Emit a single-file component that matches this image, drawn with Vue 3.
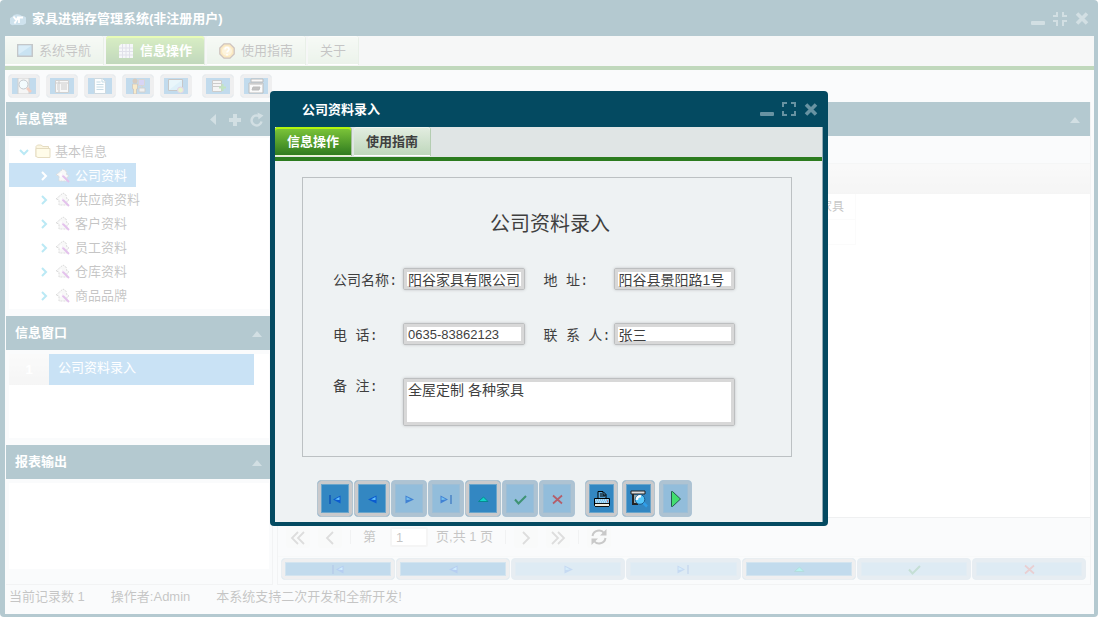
<template>
  <div class="app">
    <svg class="sprite" aria-hidden="true">
      <symbol id="i-minimize" viewBox="0 0 16 16"><rect x="1" y="10" width="14" height="4" rx="1" fill="currentColor"/></symbol>
      <symbol id="i-maximize" viewBox="0 0 16 16"><path d="M2 5V1h4M10 1h4v4M14 9v4h-4M6 13H2V9" fill="none" stroke="currentColor" stroke-width="2"/></symbol>
      <symbol id="i-restore" viewBox="0 0 16 16"><path d="M5 1v4H1M11 1v4h4M15 10h-4v5M1 10h4v5" fill="none" stroke="currentColor" stroke-width="2"/></symbol>
      <symbol id="i-close" viewBox="0 0 16 16"><path d="M3 2.500l10 10M13 2.500l-10 10" stroke="currentColor" stroke-width="3.600"/></symbol>
      <symbol id="i-logo" viewBox="0 0 16 16"><path d="M4 14a4 4 0 0 1-2-8 6 5 0 0 1 10-1 4.500 4.500 0 0 1 1 9z" fill="#5d9dc4"/><path d="M3.500 5.500l3 4M8.500 5.500l-4 7M9 12V6.500h4" fill="none" stroke="#fff" stroke-width="1.800"/></symbol>
      <symbol id="i-screen" viewBox="0 0 16 16"><path d="M0 1h16v13H0z" fill="#3b444a"/><path d="M1.500 2.500h13v10h-13z" fill="#4aa0d4"/><path d="M1.500 2.500h13l-13 9z" fill="#82c4e8"/></symbol>
      <symbol id="i-grid" viewBox="0 0 16 16"><path d="M3 1h12v14H1V3z" fill="#dfe3ea"/><path d="M1 5h14M1 8.500h14M1 12h14M4.500 1v14M8 1v14M11.500 1v14" stroke="#9a9ab8"/></symbol>
      <symbol id="i-help" viewBox="0 0 16 16"><path d="M5 .8h6L15.200 5v6L11 15.200H5L.8 11V5z" fill="#f2b632" stroke="#5d3a2c" stroke-width="1.300"/><circle cx="8" cy="8" r="5" fill="#f9d98c"/><path d="M6 6.500c0-3 4-2.500 4 0 0 1.500-2 1.500-2 3M8 11v1.500" fill="none" stroke="#fff" stroke-width="1.600"/></symbol>
      <symbol id="i-search" viewBox="0 0 16 16"><path d="M2 0h11v16H2z" fill="#ddd" stroke="#666"/><circle cx="7.500" cy="6.500" r="4.500" fill="#d7f0fa" stroke="#345"/><path d="M11 10l4 4" stroke="#d4572e" stroke-width="2.500"/></symbol>
      <symbol id="i-list" viewBox="0 0 16 16"><path d="M1.500 2.500h13v12h-13z" fill="#e8e8e8" stroke="#666"/><path d="M5 3v11M2 5h12M7 7h6M7 9h6M7 11h6M3 7h1M3 9h1M3 11h1" stroke="#555"/></symbol>
      <symbol id="i-page" viewBox="0 0 16 16"><path d="M2.500.5h8l3 3v12h-11z" fill="#f4fafd" stroke="#5d8196"/><path d="M10 1v3h3M4.500 4h4M4.500 6.500h7M4.500 9h7M4.500 11.500h7" fill="none" stroke="#48a"/></symbol>
      <symbol id="i-user" viewBox="0 0 16 16"><circle cx="5" cy="3" r="2.500" fill="#7b532b"/><path d="M2.500 6h5v5h-1v5h-3v-5h-1z" fill="#e6b94c" stroke="#543" stroke-width=".8"/><path d="M8.500 1.500h6v6h-6z" fill="#7b70dd" stroke="#777"/><path d="M9 10h6v4H9zM11 8h1v2" fill="#ccc" stroke="#666"/></symbol>
      <symbol id="i-window" viewBox="0 0 16 16"><path d="M.5 1.500h14v11H.5z" fill="#8fcbea" stroke="#444"/><path d="M1 12L14 2H1z" fill="#b4dff2"/><circle cx="12.500" cy="12" r="3" fill="#b4d86a" stroke="#a06ab5"/></symbol>
      <symbol id="i-add" viewBox="0 0 16 16"><path d="M2.500 2.500h9v3h-9zM2.500 5.500h9v3h-9zM2.500 8.500h9v5h-9z" fill="#ddd" stroke="#555"/><path d="M12.500 6v7M9 9.500h7" stroke="#35a52f" stroke-width="2"/></symbol>
      <symbol id="i-report" viewBox="0 0 16 16"><path d="M3 1h12v3H3zM1 5h14v10H1z" fill="#eee" stroke="#222"/><path d="M2 6h12M5 9h7l-1 3H4z" fill="#333" stroke="#222"/></symbol>
      <symbol id="i-folder" viewBox="0 0 16 16"><path d="M1 13V2.500L2.500 1H6l2 1.500h5.500V12" fill="#f3e19a" stroke="#a98b2f"/><path d="M3 4.500h12v9H3l-2-1V4.500z" fill="#fdf3b6" stroke="#a98b2f"/></symbol>
      <symbol id="i-home" viewBox="0 0 16 16"><path d="M1 7l7-6 3 2 1 4 2 1-2 1v4H4V8z" fill="#e8e8e8" stroke="#888" stroke-dasharray="2 1"/><path d="M7 7l7 7" stroke="#a232c0" stroke-width="2"/><path d="M6 5v4M4.500 7h4" stroke="#fff"/></symbol>
      <symbol id="i-down" viewBox="0 0 10 10"><path d="M1 3l4 4 4-4" fill="none" stroke="currentColor" stroke-width="2"/></symbol>
      <symbol id="i-right" viewBox="0 0 10 10"><path d="M3 1l4 4-4 4" fill="none" stroke="currentColor" stroke-width="2"/></symbol>
      <symbol id="i-fold-left" viewBox="0 0 16 16"><path d="M11 3v11L5 8.500z" fill="currentColor"/></symbol>
      <symbol id="i-fold-up" viewBox="0 0 16 16"><path d="M3 12h10L8 6z" fill="currentColor"/></symbol>
      <symbol id="i-plus" viewBox="0 0 16 16"><path d="M8 3v12M2 9h12" stroke="currentColor" stroke-width="4"/></symbol>
      <symbol id="i-reload" viewBox="0 0 16 16"><path d="M12.500 10.500A5 5 0 1 1 10 5" fill="none" stroke="currentColor" stroke-width="2.500"/><path d="M8.500 1.500l6 3-5 4z" fill="currentColor"/></symbol>
      <symbol id="i-first" viewBox="0 0 16 16"><path d="M3 4v9" stroke="#0a4fb5" stroke-width="1.300"/><path d="M13.500 4.500v8L6 8.500z" fill="#0a5bd0"/><path d="M12.500 6v3L8 8.500z" fill="#66c8ff"/></symbol>
      <symbol id="i-prev" viewBox="0 0 16 16"><path d="M12.500 4.500v8L4 8.500z" fill="#0a5bd0"/><path d="M11.500 6v3L7 8.500z" fill="#66c8ff"/></symbol>
      <symbol id="i-next" viewBox="0 0 16 16"><path d="M4.500 4.500v8L13 8.500z" fill="#0a5bd0"/><path d="M5.500 6v3l4.500-.5z" fill="#66c8ff"/></symbol>
      <symbol id="i-last" viewBox="0 0 16 16"><path d="M13 4v9" stroke="#0a4fb5" stroke-width="1.300"/><path d="M2.500 4.500v8l7.500-4z" fill="#0a5bd0"/><path d="M3.500 6v3L8 8.500z" fill="#66c8ff"/></symbol>
      <symbol id="i-edit" viewBox="0 0 16 16"><path d="M3.500 10.500h9.500L8.500 6z" fill="#10d4c8" stroke="#068a90"/></symbol>
      <symbol id="i-check" viewBox="0 0 16 16"><path d="M3 8.500l3.500 4L14 5" fill="none" stroke="#087830" stroke-width="2"/></symbol>
      <symbol id="i-cancel" viewBox="0 0 16 16"><path d="M4 4.500l9 8M13 4.500l-9 8" stroke="#cc2020" stroke-width="1.700"/></symbol>
      <symbol id="i-print" viewBox="0 0 18 18"><path d="M5 8V1.500h5l3 3V8" fill="#5aa5d6" stroke="#000"/><path d="M7 4h2M7 6h5M10 2v3h3" fill="none" stroke="#000"/><path d="M1.500 8.500h15v7h-15z" fill="#7fc4ee" stroke="#000"/><path d="M2 10h14M3 12h11" stroke="#e8f6ff" stroke-dasharray="1 1"/><path d="M2 14h14v2H2z" fill="#f2eee0"/><path d="M2 16.500h14M2 13.500h14" stroke="#111"/><path d="M14 11h1" stroke="#e22"/></symbol>
      <symbol id="i-preview" viewBox="0 0 18 18"><path d="M1 1h14v3H1z" fill="#ddd" stroke="#222"/><path d="M3 4v10h5" fill="none" stroke="#222" stroke-width="2"/><path d="M4 5h9v8H4z" fill="#9aa"/><circle cx="10" cy="9.500" r="4.800" fill="#54c6fa" stroke="#1a5a8c"/><path d="M7 10a3 3 0 0 1 4-3.500" fill="none" stroke="#fff" stroke-width="2.500"/><path d="M13.500 13l3.500 3.500" stroke="#2f9ee8" stroke-width="2.500"/></symbol>
      <symbol id="i-run" viewBox="0 0 18 18"><path d="M4.500 1.500h1l8 7.500-8 7.500h-1z" fill="#42dd70" stroke="#255c50"/></symbol>
      <symbol id="i-dbl-left" viewBox="0 0 16 16"><path d="M8 3L2 9l6 6M14 3L8 9l6 6" fill="none" stroke="currentColor" stroke-width="1.800"/></symbol>
      <symbol id="i-left-lg" viewBox="0 0 16 16"><path d="M11 3L5 9l6 6" fill="none" stroke="currentColor" stroke-width="1.800"/></symbol>
      <symbol id="i-right-lg" viewBox="0 0 16 16"><path d="M5 3l6 6-6 6" fill="none" stroke="currentColor" stroke-width="1.800"/></symbol>
      <symbol id="i-dbl-right" viewBox="0 0 16 16"><path d="M2 3l6 6-6 6M8 3l6 6-6 6" fill="none" stroke="currentColor" stroke-width="1.800"/></symbol>
      <symbol id="i-refresh" viewBox="0 0 16 16"><path d="M1.500 7C2.500 1 10 0 13 4M14.500 9c-1 6-8.500 7-11.500 3" fill="none" stroke="currentColor" stroke-width="2"/><path d="M15.500 0v6.500H9zM.5 16V9.500H7z" fill="currentColor"/></symbol>
    </svg>

    <div class="frame">
      <header class="titlebar">
        <svg class="icon"><use href="#i-logo"/></svg>
        <h1>家具进销存管理系统(非注册用户)</h1>
        <div class="win-tools">
          <button aria-label="最小化"><svg class="icon"><use href="#i-minimize"/></svg></button>
          <button aria-label="还原"><svg class="icon"><use href="#i-restore"/></svg></button>
          <button aria-label="关闭"><svg class="icon"><use href="#i-close"/></svg></button>
        </div>
      </header>

      <div class="window-body">
        <nav class="tabs">
          <button v-for="t in mainTabs" :key="t.label" class="tab" :class="{ active: t.active }">
            <svg v-if="t.icon" class="icon"><use :href="'#i-' + t.icon"/></svg>
            <span>{{ t.label }}</span>
          </button>
        </nav>

        <div class="toolbar">
          <div v-for="(group, i) in tools" :key="i" class="tool-group">
            <button v-for="b in group" :key="b.icon" class="tool-btn" :aria-label="b.label">
              <svg class="icon"><use :href="'#i-' + b.icon"/></svg>
            </button>
          </div>
        </div>

        <div class="main">
          <aside class="sidebar">
            <section class="panel">
              <div class="panel-head">
                <h2>信息管理</h2>
                <button aria-label="折叠"><svg class="icon"><use href="#i-fold-left"/></svg></button>
                <button aria-label="添加"><svg class="icon"><use href="#i-plus"/></svg></button>
                <button aria-label="刷新"><svg class="icon"><use href="#i-reload"/></svg></button>
              </div>
              <div class="panel-body">
                <ul class="tree">
                  <li>
                    <a href="#" class="node root">
                      <svg class="arrow"><use href="#i-down"/></svg>
                      <svg class="icon"><use href="#i-folder"/></svg>基本信息
                    </a>
                  </li>
                  <li v-for="n in nodes" :key="n">
                    <a href="#" class="node" :class="{ selected: n === current }" @click.prevent="current = n">
                      <svg class="arrow"><use href="#i-right"/></svg>
                      <svg class="icon"><use href="#i-home"/></svg>{{ n }}
                    </a>
                  </li>
                </ul>
              </div>
            </section>

            <section class="panel">
              <div class="panel-head">
                <h2>信息窗口</h2>
                <button aria-label="折叠"><svg class="icon"><use href="#i-fold-up"/></svg></button>
              </div>
              <div class="panel-body windows">
                <div class="sheet">
                  <table class="window-list">
                    <tbody>
                      <tr><th scope="row">1</th><td>公司资料录入</td></tr>
                    </tbody>
                  </table>
                </div>
              </div>
            </section>

            <section class="panel grow">
              <div class="panel-head">
                <h2>报表输出</h2>
                <button aria-label="折叠"><svg class="icon"><use href="#i-fold-up"/></svg></button>
              </div>
              <div class="panel-body reports"><div class="sheet"></div></div>
            </section>
          </aside>

          <section class="panel content">
            <div class="panel-head">
              <button aria-label="折叠"><svg class="icon"><use href="#i-fold-up"/></svg></button>
            </div>
            <div class="grid-bar"></div>
            <div class="grid-head"></div>
            <div class="grid-area">
              <table class="grid">
                <tbody>
                  <tr><td>家具</td></tr>
                  <tr><td></td></tr>
                </tbody>
              </table>
            </div>
            <div class="pager">
              <button aria-label="首页"><svg class="icon"><use href="#i-dbl-left"/></svg></button>
              <button aria-label="上一页"><svg class="icon"><use href="#i-left-lg"/></svg></button>
              <i class="sep"></i>
              <label for="page">第</label>
              <input id="page" v-model="page" type="text">
              <span>页,共 1 页</span>
              <i class="sep"></i>
              <button aria-label="下一页"><svg class="icon"><use href="#i-right-lg"/></svg></button>
              <button aria-label="末页"><svg class="icon"><use href="#i-dbl-right"/></svg></button>
              <i class="sep"></i>
              <button class="reload" aria-label="刷新"><svg class="icon"><use href="#i-refresh"/></svg></button>
            </div>
            <div class="record-bar">
              <button v-for="b in records" :key="b.icon" class="tool-btn" :disabled="b.disabled" :aria-label="b.label">
                <svg class="icon"><use :href="'#i-' + b.icon"/></svg>
              </button>
            </div>
          </section>
        </div>

        <footer class="statusbar">
          <span>当前记录数 1</span>
          <span>操作者:Admin</span>
          <span>本系统支持二次开发和全新开发!</span>
        </footer>
      </div>

      <div class="mask">
        <div class="dialog" role="dialog" aria-labelledby="dialog-title">
          <header class="titlebar">
            <h2 id="dialog-title">公司资料录入</h2>
            <div class="win-tools">
              <button aria-label="最小化"><svg class="icon"><use href="#i-minimize"/></svg></button>
              <button aria-label="最大化"><svg class="icon"><use href="#i-maximize"/></svg></button>
              <button aria-label="关闭"><svg class="icon"><use href="#i-close"/></svg></button>
            </div>
          </header>
          <div class="dialog-body">
            <nav class="tabs">
              <button class="tab active">信息操作</button>
              <button class="tab">使用指南</button>
            </nav>
            <form class="form" @submit.prevent>
              <h3>公司资料录入</h3>
              <div class="fields">
                <div class="field">
                  <label for="name">公司名称:</label>
                  <input id="name" v-model="form.name" type="text">
                </div>
                <div class="field">
                  <label for="address">地 址:</label>
                  <input id="address" v-model="form.address" type="text">
                </div>
                <div class="field">
                  <label for="phone">电 话:</label>
                  <input id="phone" v-model="form.phone" class="number" type="text">
                </div>
                <div class="field">
                  <label for="contact">联 系 人:</label>
                  <input id="contact" v-model="form.contact" type="text">
                </div>
                <div class="field wide">
                  <label for="remark">备 注:</label>
                  <textarea id="remark" v-model="form.remark"></textarea>
                </div>
              </div>
            </form>
            <div class="actions">
              <div class="nav-btns">
                <button v-for="b in records" :key="b.icon" class="tool-btn" :disabled="b.disabled" :aria-label="b.label">
                  <svg class="icon"><use :href="'#i-' + b.icon"/></svg>
                </button>
              </div>
              <div class="out-btns">
                <button class="tool-btn" aria-label="打印"><svg class="icon"><use href="#i-print"/></svg></button>
                <button class="tool-btn" aria-label="预览"><svg class="icon"><use href="#i-preview"/></svg></button>
                <button class="tool-btn run" disabled aria-label="执行"><svg class="icon"><use href="#i-run"/></svg></button>
              </div>
            </div>
          </div>
        </div>
      </div>
    </div>
  </div>
</template>

<script setup>
import { reactive, ref } from 'vue'

const mainTabs = [
  { label: '系统导航', icon: 'screen' },
  { label: '信息操作', icon: 'grid', active: true },
  { label: '使用指南', icon: 'help' },
  { label: '关于' },
]

const tools = [
  [
    { icon: 'search', label: '查询' },
    { icon: 'list', label: '列表' },
    { icon: 'page', label: '文档' },
    { icon: 'user', label: '用户' },
    { icon: 'window', label: '窗口' },
  ],
  [
    { icon: 'add', label: '新增' },
    { icon: 'report', label: '报表' },
  ],
]

const records = [
  { icon: 'first', label: '首记录' },
  { icon: 'prev', label: '上一条' },
  { icon: 'next', label: '下一条', disabled: true },
  { icon: 'last', label: '末记录', disabled: true },
  { icon: 'edit', label: '编辑' },
  { icon: 'check', label: '保存', disabled: true },
  { icon: 'cancel', label: '取消', disabled: true },
]

const nodes = ['公司资料', '供应商资料', '客户资料', '员工资料', '仓库资料', '商品品牌']
const current = ref('公司资料')
const page = ref('1')

const form = reactive({
  name: '阳谷家具有限公司',
  address: '阳谷县景阳路1号',
  phone: '0635-83862123',
  contact: '张三',
  remark: '全屋定制 各种家具',
})
</script>

<style>
body {
  margin: 0;
}
</style>

<style scoped>
.app {
  box-sizing: border-box;
  min-height: 100vh;
  padding: 0 1px 1px 0;
  display: flex;
  background: #fff;
  font: 13px/18px "Liberation Sans", "Noto Sans CJK SC", sans-serif;
  color: #3f3f3f;
}
.app *, .app *::before {
  box-sizing: border-box;
}
.sprite {
  position: absolute;
  width: 0;
  height: 0;
}
.icon {
  width: 16px;
  height: 16px;
  flex-shrink: 0;
  display: block;
}
button {
  padding: 0;
  border: 0;
  background: none;
  font: inherit;
  color: inherit;
}
h1, h2, h3 {
  margin: 0;
  font-size: 13px;
  font-weight: bold;
}

/* windows */
.frame {
  position: relative;
  flex: 1;
  min-width: 0;
  display: flex;
  flex-direction: column;
  padding: 0 4px 3px 5px;
  border-radius: 4px;
  background: #044a61;
}
.titlebar {
  display: flex;
  align-items: center;
  gap: 6px;
  height: 36px;
  padding: 2px 4px 0 5px;
  color: #fff;
}
.win-tools {
  display: flex;
  gap: 6px;
  margin-left: auto;
  color: #6893a2;
}
.window-body {
  flex: 1;
  display: flex;
  flex-direction: column;
  background: #eef2f3;
}

/* tabs */
.tabs {
  display: flex;
  gap: 3px;
  height: 34px;
  border-bottom: 4px solid #2c7c1f;
  background: #e0e5e5;
}
.tab {
  display: flex;
  align-items: center;
  gap: 6px;
  height: 29px;
  padding: 0 12px;
  border-radius: 3px 3px 0 0;
  background: linear-gradient(#e3ede1, #bdd6ba);
  box-shadow: 1px 0 #b4cdb1, inset 0 1px #f0f5ef, inset 0 -1px #fff;
}
.tab.active {
  background: linear-gradient(#80c83a, #2c781f);
  box-shadow: 1px 0 #a6bf9f, inset 0 2px #b2f50e, inset 0 -1px #e9f7ce;
  color: #fff;
  font-weight: bold;
}
.dialog .tab {
  font-weight: bold;
}

/* toolbar */
.toolbar {
  display: flex;
  gap: 10px;
  padding: 4px 3px;
}
.tool-group {
  display: flex;
  gap: 6px;
}
.tool-btn {
  display: flex;
  align-items: center;
  justify-content: center;
  width: 32px;
  height: 24px;
  border: 1px solid #b4c5d0;
  border-radius: 4px;
  background: #3387c2;
  box-shadow: inset 0 0 0 3px #cacacc, inset 0 0 0 4px #6ba5ca;
}
.toolbar .tool-btn {
  border-color: #cacacc;
  box-shadow: inset 0 0 0 3px #cacacc;
}
.tool-btn:disabled {
  border-color: #aec4d4;
  background: #92bddb;
  box-shadow: inset 0 0 0 3px #aec3d2, inset 0 0 0 4px #9dbed6;
}
.tool-btn:disabled .icon {
  opacity: 0.6;
}
.tool-btn.run .icon {
  opacity: 1;
}

/* panels */
.main {
  flex: 1;
  display: flex;
  gap: 4px;
  padding: 0 3px 0 1px;
}
.sidebar {
  width: 267px;
  flex-shrink: 0;
  display: flex;
  flex-direction: column;
  gap: 1px;
  border-right: 1px solid #d2d8d9;
  border-bottom: 1px solid #d2d8d9;
}
.panel {
  display: flex;
  flex-direction: column;
}
.panel.grow {
  flex: 1;
}
.panel-head {
  display: flex;
  align-items: center;
  justify-content: flex-end;
  gap: 6px;
  height: 34px;
  padding: 0 7px 0 9px;
  background: #044a61;
  color: #6893a2;
}
.panel-head h2 {
  flex: 1;
  color: #fff;
}
.panel-body {
  flex: 1;
  display: flex;
  flex-direction: column;
  padding: 2px 3px 6px;
}
.tree {
  margin: 0;
  padding: 1px 0 2px;
  list-style: none;
  background: #fff;
}
.tree li {
  display: flex;
}
.node {
  display: flex;
  align-items: center;
  height: 24px;
  padding: 2px 9px 0 30px;
  color: inherit;
  text-decoration: none;
}
.node .icon {
  margin: 0 4px 0 6px;
}
.node.root {
  padding-left: 10px;
}
.arrow {
  width: 10px;
  height: 10px;
  color: #1ab4dc;
}
.node.selected, .node.selected .arrow {
  color: #fff;
}
.node.selected {
  background: #4b9ede;
}
.sheet {
  flex: 1;
  background: #fff;
}
.windows {
  min-height: 94px;
  padding-top: 4px;
}
.reports {
  padding: 4px 3px 15px;
}
.window-list {
  width: 245px;
  height: 31px;
  border-collapse: collapse;
  color: #fff;
}
.window-list th {
  width: 40px;
  padding: 0;
  background: linear-gradient(#efefef, #dedede);
}
.window-list td {
  padding: 0 9px 3px;
  background: #4b9ede;
}

/* record grid */
.content {
  flex: 1;
  min-width: 0;
  border: 1px solid #d2d8d9;
  border-top: 0;
}
.grid-bar {
  height: 28px;
  border-bottom: 1px solid #dcdfe0;
}
.grid-head {
  height: 30px;
  background: linear-gradient(#ebebeb, #dedede);
}
.grid-area {
  flex: 1;
  background: #fff;
  border-bottom: 1px solid #c8ccd0;
}
.grid {
  width: 578px;
  border-collapse: collapse;
}
.grid td {
  height: 25px;
  padding: 2px 11px 0 0;
  border: 1px solid #f0f0f0;
  border-top: 0;
  font-size: 12px;
  text-align: right;
}
.pager {
  display: flex;
  align-items: center;
  gap: 8px;
  height: 39px;
  padding: 0 8px;
  border-bottom: 1px solid #e6e9ea;
}
.pager button {
  display: flex;
  align-items: center;
  justify-content: center;
  width: 24px;
  height: 22px;
  border-radius: 3px;
  background: #ebeeee;
  color: #8d8d8d;
}
.pager .reload {
  color: #4a4a4a;
}
.pager .sep {
  width: 1px;
  height: 14px;
  background: #cfd4d6;
}
.pager label {
  padding: 0 6px 0 4px;
}
.pager span {
  padding-right: 4px;
}
.pager input {
  width: 38px;
  height: 20px;
  padding: 0 4px;
  border: 2px solid #dedede;
  border-radius: 2px;
  background: #fff;
  font: inherit;
  color: inherit;
}
.record-bar {
  display: flex;
  gap: 1px;
  padding: 1px 4px 4px 3px;
}
.record-bar .tool-btn {
  flex: 1;
  height: 22px;
}
.statusbar {
  display: flex;
  gap: 26px;
  height: 29px;
  padding: 3px 4px;
}

/* dialog */
.mask {
  position: absolute;
  inset: 0;
  display: flex;
  align-items: center;
  justify-content: center;
  background: rgba(255, 255, 255, 0.7);
}
.dialog {
  width: 558px;
  padding: 0 5px 4px;
  border-radius: 4px;
  background: #044a61;
}
.dialog .titlebar {
  padding-left: 27px;
}
.dialog-body {
  padding-bottom: 5px;
  background: #eef2f3;
  border-right: 1px solid #8fa9b3;
}
.form {
  margin: 16px 30px 23px 27px;
  padding: 31px 0 30px;
  border: 1px solid #bcc1c3;
}
.form h3 {
  margin-bottom: 29px;
  padding-left: 6px;
  font-size: 20px;
  line-height: 30px;
  font-weight: normal;
  text-align: center;
}
.fields {
  display: grid;
  grid-template-columns: 1fr 1fr;
  gap: 29px 19px;
  padding: 0 56px 0 30px;
}
.field {
  display: flex;
  align-items: flex-start;
  min-width: 0;
  font-size: 14px;
}
.field.wide {
  grid-column: span 2;
}
.field label {
  width: 70px;
  flex-shrink: 0;
  font-family: "Liberation Mono", "Noto Sans CJK SC", monospace;
  line-height: 26px;
  white-space: nowrap;
}
.field.wide label {
  line-height: 18px;
}
.field input, .field textarea {
  flex: 1;
  width: 0;
  min-width: 0;
  height: 22px;
  padding: 0 4px;
  border: 1px solid #bdbfc0;
  border-radius: 2px;
  background: #fff;
  box-shadow: inset 0 0 0 3px #d8d8d8, 0 0 3px #c0c4c5;
  font-family: inherit;
  font-size: 14px;
  line-height: 16px;
  color: inherit;
}
.field .number {
  font-size: 13px;
}
.field textarea {
  display: block;
  height: 48px;
  padding-top: 3px;
  resize: none;
}
.actions {
  display: flex;
  gap: 10px;
  padding-left: 42px;
}
.nav-btns {
  display: flex;
  gap: 1px;
}
.out-btns {
  display: flex;
  gap: 4px;
}
.actions .tool-btn {
  width: 36px;
  height: 37px;
}
.actions .out-btns .tool-btn {
  width: 33px;
}
.out-btns .icon {
  width: 18px;
  height: 18px;
}
</style>
